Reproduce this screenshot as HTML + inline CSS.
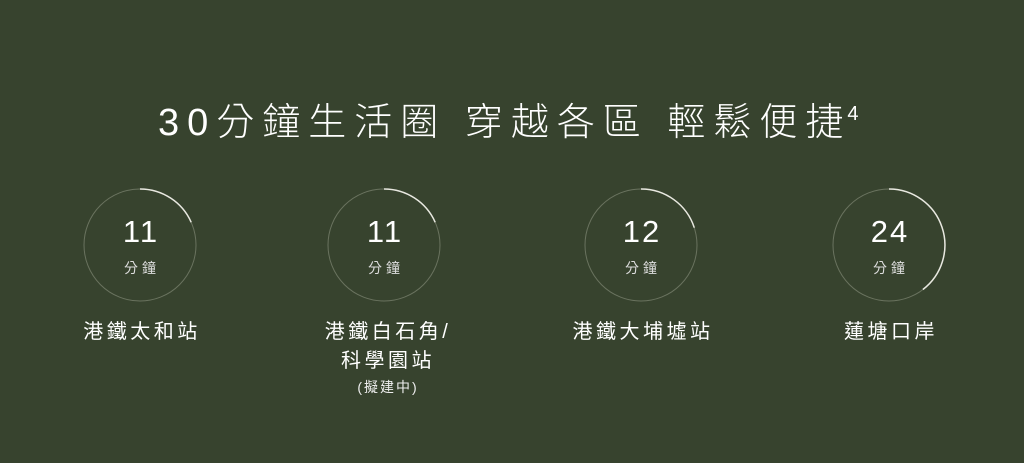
<!DOCTYPE html><html><head><meta charset="utf-8"><style>
body{margin:0;width:1024px;height:463px;background:#37432e;overflow:hidden;font-family:"Liberation Sans","Noto Sans CJK TC",sans-serif;color:#fff;position:relative}
.t{position:absolute;top:100px;left:158px;font-size:38px;line-height:46px;letter-spacing:8px;white-space:nowrap;font-weight:300}
.t sup{font-size:20px;position:relative;top:-9px;left:-4px;vertical-align:top;letter-spacing:0}
.c{position:absolute;top:188px;width:114px;height:114px;margin-left:-57px}
.n{position:absolute;left:1px;width:114px;top:26px;text-align:center;font-size:31px;letter-spacing:2px}
.m{position:absolute;left:2px;width:114px;top:70px;text-align:center;font-size:14px;color:#ddd;letter-spacing:4px}
.l{position:absolute;top:318px;width:220px;margin-left:-108px;text-align:center;font-size:20px;line-height:29px;letter-spacing:3.5px}
.l small{display:block;font-size:14px;line-height:22px;color:#eee;letter-spacing:2px}
</style></head><body>
<div class="t">30分鐘生活圈 穿越各區 輕鬆便捷<sup>4</sup></div>
<svg width="1024" height="463" style="position:absolute;left:0;top:0">
<g fill="none" stroke-width="1">
<circle cx="140" cy="245" r="56" stroke="#6a735f"/>
<circle cx="384" cy="245" r="56" stroke="#6a735f"/>
<circle cx="641" cy="245" r="56" stroke="#6a735f"/>
<circle cx="889" cy="245" r="56" stroke="#6a735f"/>
</g>
<g fill="none" stroke="#e8e8e0" stroke-width="1.5">
<path d="M140 189 A56 56 0 0 1 191.2 222.3"/>
<path d="M384 189 A56 56 0 0 1 435.2 222.3"/>
<path d="M641 189 A56 56 0 0 1 694.3 227.7"/>
<path d="M889 189 A56 56 0 0 1 922.9 289.5"/>
</g></svg>
<div class="c" style="left:140px"><div class="n">11</div><div class="m">分鐘</div></div>
<div class="c" style="left:384px"><div class="n">11</div><div class="m">分鐘</div></div>
<div class="c" style="left:641px"><div class="n">12</div><div class="m">分鐘</div></div>
<div class="c" style="left:889px"><div class="n">24</div><div class="m">分鐘</div></div>
<div class="l" style="left:140px">港鐵太和站</div>
<div class="l" style="left:386px">港鐵白石角/<br>科學園站<small>(擬建中)</small></div>
<div class="l" style="left:641px">港鐵大埔墟站</div>
<div class="l" style="left:889px">蓮塘口岸</div>
</body></html>
